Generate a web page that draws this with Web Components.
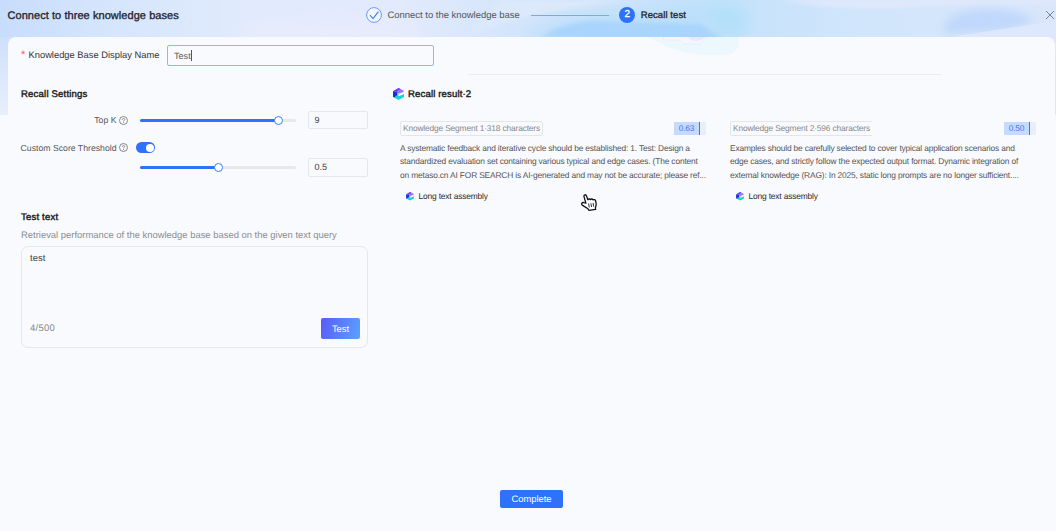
<!DOCTYPE html>
<html lang="en">
<head>
<meta charset="UTF-8">
<title>Recall test</title>
<style>
    html, body {
        margin: 0;
        height: 100%;
        overflow: hidden;
    }
    body {
        font-family: "Liberation Sans", Arial, sans-serif;
        text-rendering: geometricPrecision;
        background: #f9fafe;
        color: #444;
    }
</style>
</head>
<body>
<recall-page></recall-page>

<script>
// Small helper: every component gets an open shadow root with its own styles
class BaseElement extends HTMLElement {
    constructor() {
        super();
        this.attachShadow({ mode: "open" });
        this.shadowRoot.innerHTML = `
            <style>* { box-sizing: border-box; } ${this.styles()}</style>
            ${this.markup()}
        `;
    }
    styles() { return ""; }
    markup() { return ""; }
}

// Cube logo
class KbLogo extends BaseElement {
    styles() {
        return `
            :host { display: block; width: 11px; height: 12px; flex: none; }
            svg { display: block; width: 100%; height: 100%; }
        `;
    }
    markup() {
        return `
            <svg viewBox="0 0 22 24">
                <path d="M11 0 21 5 21 8 13 11 8 10 1 6Z" fill="#9a78f8"/>
                <path d="M11 0 15 2 6 8 1 6Z" fill="#6a45ec"/>
                <path d="M0 6 9 9 9 16 5 20 0 18Z" fill="#1c2be0"/>
                <path d="M9 10 13 11 12 15 9 15Z" fill="#9fc4fa"/>
                <path d="M7 15 13 16 22 12 22 18 11 24 2 19Z" fill="#18d3d4"/>
            </svg>
        `;
    }
}

// Decorative sky behind the header
class SkyBackdrop extends BaseElement {
    styles() {
        return `
            :host { display: block; position: absolute; inset: 0 0 auto 0; height: 115px; overflow: hidden; }
            svg { display: block; }
        `;
    }
    markup() {
        return `
            <svg width="1056" height="115" viewBox="0 0 1056 115">
                <defs>
                    <linearGradient id="base" x1="0" x2="1" y1="0" y2="0">
                        <stop offset="0" stop-color="#c7ddfc"/>
                        <stop offset=".1" stop-color="#d5e5fc"/>
                        <stop offset=".24" stop-color="#e1ebfc"/>
                        <stop offset=".38" stop-color="#e2eafc"/>
                        <stop offset=".52" stop-color="#cfe3fb"/>
                        <stop offset=".7" stop-color="#c6e2fb"/>
                        <stop offset=".82" stop-color="#d1e6fb"/>
                        <stop offset="1" stop-color="#d9e6fb"/>
                    </linearGradient>
                    <linearGradient id="side" x1="0" x2="0" y1="0" y2="1">
                        <stop offset="0" stop-color="#cfe0fb"/>
                        <stop offset="1" stop-color="#e8effc"/>
                    </linearGradient>
                    <filter id="soft" x="-20%" y="-60%" width="140%" height="220%"><feGaussianBlur stdDeviation="7"/></filter>
                    <filter id="mid" x="-20%" y="-60%" width="140%" height="220%"><feGaussianBlur stdDeviation="4"/></filter>
                    <filter id="edge" x="-10%" y="-20%" width="120%" height="140%"><feGaussianBlur stdDeviation="2"/></filter>
                </defs>
                <rect width="1056" height="115" fill="url(#base)"/>
                <rect y="37" width="30" height="78" fill="url(#side)"/>
                <ellipse cx="330" cy="32" rx="90" ry="12" fill="#e8ecfc" filter="url(#soft)"/>
                <path d="M460 40 Q520 10 640 0 L500 0 Z" fill="#dce9fb" filter="url(#edge)"/>
                <path d="M520 40 Q560 14 640 10 L700 0 740 20 745 40Z" fill="#bce0fa" filter="url(#soft)"/>
                <path d="M541 37 Q560 24 590 21 L700 24 726 40Z" fill="#a9d4fb" filter="url(#edge)"/>
                <path d="M706 6 Q740 0 746 16 T722 34Z" fill="#b3e0fa" filter="url(#soft)"/>
                <path d="M780 0 H1056 V4 Q960 4 900 7 T780 0Z" fill="#e2e9fc" filter="url(#edge)"/>
                <path d="M945 34 Q940 14 975 10 T1036 20 L1010 30Z" fill="#c0d8fb" filter="url(#mid)"/>
                <path d="M955 36 Q1010 28 1056 21 V60 H955Z" fill="#dde8fc"/>
            </svg>
        `;
    }
}

// Header: title, steps and close button
class WizardHeader extends BaseElement {
    styles() {
        return `
            :host { display: grid; grid-template-columns: 366px 1fr auto; align-items: center; height: 30px; flex: none; position: relative; }
            h1 { margin: 1px 0 0; padding-left: 7.5px; font-size: 11px; font-weight: 400; letter-spacing: .06px; color: #1d2129; -webkit-text-stroke: .3px #1d2129; }
            .steps { display: flex; align-items: center; font-size: 9.45px; color: #4e5560; white-space: nowrap; }
            .dot { width: 16px; height: 16px; margin-right: 5.5px; display: block; flex: none; }
            .line { width: 78px; height: 1px; background: #7ba6f6; margin: 0 10.5px 0 11px; }
            .num { border-radius: 50%; background: #2e71fb; color: #fff; font-size: 10px; line-height: 16px; text-align: center; -webkit-text-stroke: .3px #fff; }
            .now { color: #1d2129; font-size: 9.5px; letter-spacing: .08px; -webkit-text-stroke: .3px #1d2129; }
            .close { width: 10px; height: 10px; margin-right: 1px; display: block; }
        `;
    }
    markup() {
        return `
            <h1>Connect to three knowledge bases</h1>
            <div class="steps">
                <svg class="dot" viewBox="0 0 16 16" fill="none">
                    <circle cx="8" cy="8" r="7.4" fill="#f2f7ff" stroke="#5a91f8" stroke-width=".9"/>
                    <path d="M4 8.2 7 11.6 12.4 4.6" stroke="#3f7ef8" stroke-width="1.1"/>
                </svg>
                <span>Connect to the knowledge base</span>
                <span class="line"></span>
                <span class="dot num">2</span>
                <span class="now">Recall test</span>
            </div>
            <svg class="close" viewBox="0 0 10 10" stroke="#7a8496" stroke-width="1"><path d="M1 1 9 9M9 1 1 9"/></svg>
        `;
    }
}

// Label with the question mark
class HelpLabel extends BaseElement {
    styles() {
        return `
            :host { display: flex; align-items: center; justify-content: flex-end; gap: 2.5px; font-size: 8.7px; color: #555; white-space: nowrap; }
            svg { width: 9px; height: 9px; flex: none; }
        `;
    }
    markup() {
        return `
            <slot></slot>
            <svg viewBox="0 0 18 18" fill="none" stroke="#666" stroke-width="1.5">
                <circle cx="9" cy="9" r="8"/>
                <path d="M6.6 7.4C6.6 4 11.6 4.2 11.4 7.2 11.3 8.8 9 8.8 9 11"/>
                <path d="M9 12.4V14"/>
            </svg>
        `;
    }
}

class RangeSlider extends BaseElement {
    static get observedAttributes() { return ["percent"]; }
    styles() {
        return `
            :host { display: grid; align-items: center; width: 156px; height: 10px; }
            .track { height: 3px; border-radius: 2px; background: #e7e9e9; display: flex; align-items: center; }
            .fill { height: 3px; border-radius: 2px; background: #2e71fb; }
            .knob { width: 9px; height: 9px; flex: none; margin: 0 -4.5px; border: 1.2px solid #3c7cfb; border-radius: 50%; background: #fff; }
        `;
    }
    markup() {
        return `<div class="track"><div class="fill"></div><div class="knob"></div></div>`;
    }
    attributeChangedCallback(name, old, value) {
        this.shadowRoot.querySelector(".fill").style.width = `${value}%`;
    }
}

class NumberBox extends BaseElement {
    styles() {
        return `
            :host { display: flex; align-items: center; width: 60px; height: 18px; padding-left: 5.5px; border: 1px solid #e6e7ea; border-radius: 2px; font-size: 9px; color: #444; box-sizing: border-box; }
        `;
    }
    markup() { return `<slot></slot>`; }
}

class ToggleSwitch extends BaseElement {
    styles() {
        return `
            :host { display: flex; align-items: center; justify-content: flex-end; width: 19px; height: 11px; border-radius: 6px; background: #2e71fb; padding-right: 1.5px; box-sizing: border-box; }
            i { width: 8px; height: 8px; border-radius: 50%; background: #fff; }
        `;
    }
    markup() { return `<i></i>`; }
}

// Left column: settings and query box
class RecallSettings extends BaseElement {
    styles() {
        return `
            :host { display: block; width: 347px; padding-top: 1px; }
            h2 { margin: 0; font-size: 9.6px; line-height: 12px; font-weight: 400; letter-spacing: .17px; color: #1a1a1a; -webkit-text-stroke: .4px #1a1a1a; }
            .grid { display: grid; grid-template: 18px 37px 20px / 107px 156px 60px; column-gap: 12px; align-items: center; margin-top: 10px; }
            toggle-switch { margin-left: -4px; }
            .second { grid-column: 2 / 4; display: flex; gap: 12px; align-items: center; align-self: start; margin-top: -9px; height: 20px; }
            .second number-box { height: 19px; }
            .query { margin-top: 26px; }
            p { margin: 5px 0; font-size: 9.43px; line-height: 12px; color: #8a8d92; white-space: nowrap; }
            .box { height: 102px; border: 1px solid #e6e7ea; border-radius: 7px; padding: 6px 7px 8px 8px; display: flex; flex-direction: column; justify-content: space-between; font-size: 9.5px; }
            .foot { display: flex; justify-content: space-between; align-items: center; color: #888; letter-spacing: .28px; }
            .go { width: 39px; height: 21px; border-radius: 2px; background: linear-gradient(105deg, #565cfb, #5b7afd 45%, #58a2ff); color: #fff; display: grid; place-items: center; font-size: 9.4px; letter-spacing: 0; }
        `;
    }
    markup() {
        return `
            <h2>Recall Settings</h2>
            <div class="grid">
                <help-label>Top K</help-label>
                <range-slider percent="89"></range-slider>
                <number-box>9</number-box>
                <help-label>Custom Score Threshold</help-label>
                <toggle-switch></toggle-switch>
                <span></span>
                <div class="second">
                    <range-slider percent="50"></range-slider>
                    <number-box>0.5</number-box>
                </div>
            </div>
            <div class="query">
                <h2>Test text</h2>
                <p>Retrieval performance of the knowledge base based on the given text query</p>
                <div class="box">
                    <span>test</span>
                    <div class="foot"><span>4/500</span><span class="go">Test</span></div>
                </div>
            </div>
        `;
    }
}

// One recalled segment; the lines come in through the slot
class SegmentCard extends BaseElement {
    styles() {
        return `
            :host { display: block; width: 306px; font-size: 8.4px; letter-spacing: -.16px; }
            .top { display: flex; justify-content: space-between; align-items: center; height: 15px; }
            .tag { height: 15px; border: 1px solid #e4e5e7; border-radius: 2px; padding: 0 2px; line-height: 13px; color: #888; white-space: nowrap; }
            :host([open-end]) .tag { border-right-color: transparent; }
            .score { width: 32px; height: 13px; background: #e7eefe; display: flex; }
            .score b { width: 26px; background: #c5dafd; border-right: 1px solid #3b76ee; color: #3e7af5; font-weight: 400; line-height: 13px; text-align: center; font-size: 8.3px; letter-spacing: -.1px; }
            .body { margin-top: 6px; line-height: 13.3px; color: #555; white-space: pre; }
            .from { display: flex; align-items: center; gap: 4.5px; margin: 9.5px 0 0 6px; color: #2a2a2a; line-height: 10px; }
            kb-logo { width: 8px; height: 8.5px; }
        `;
    }
    markup() {
        return `
            <div class="top"><span class="tag"></span><span class="score"><b></b></span></div>
            <div class="body"><slot></slot></div>
            <div class="from"><kb-logo></kb-logo><span>Long text assembly</span></div>
        `;
    }
    connectedCallback() {
        this.shadowRoot.querySelector(".tag").textContent = this.getAttribute("label");
        this.shadowRoot.querySelector("b").textContent = this.getAttribute("score");
    }
}

class RecallResults extends BaseElement {
    styles() {
        return `
            :host { display: block; }
            h2 { margin: 0; display: flex; align-items: center; gap: 4px; height: 12px; font-size: 9.6px; font-weight: 400; letter-spacing: .13px; color: #1a1a1a; -webkit-text-stroke: .4px #1a1a1a; }
            .cards { display: flex; gap: 24px; margin: 21px 0 0 7px; }
        `;
    }
    markup() {
        return `
            <h2><kb-logo></kb-logo><span>Recall result·2</span></h2>
            <div class="cards">
                <segment-card label="Knowledge Segment 1·318 characters" score="0.63"><div>A systematic feedback and iterative cycle should be established: 1. Test: Design a</div><div>standardized evaluation set containing various typical and edge cases. (The content</div><div>on metaso.cn AI FOR SEARCH is AI-generated and may not be accurate; please ref...</div></segment-card>
                <segment-card open-end label="Knowledge Segment 2·596 characters" score="0.50"><div>Examples should be carefully selected to cover typical application scenarios and</div><div>edge cases, and strictly follow the expected output format. Dynamic integration of</div><div>external knowledge (RAG): In 2025, static long prompts are no longer sufficient....</div></segment-card>
            </div>
        `;
    }
}

// Hand pointer floating over the results
class HandPointer extends BaseElement {
    styles() {
        return `
            :host { display: block; position: absolute; left: 581px; top: 194px; width: 16px; height: 17px; }
            svg { display: block; width: 100%; height: 100%; }
        `;
    }
    markup() {
        return `
            <svg viewBox="0 0 16 17" fill="#fff" stroke="#111" stroke-width="1.3" stroke-linejoin="round">
                <path d="M4.9 9.2 3 2.6C2.6.6 4.9.1 5.4 1.8L6.9 5.8C7.5 4.7 9 4.8 9.4 5.6 10.2 4.6 11.7 4.9 12 5.9 13.1 5.1 14.4 5.8 14.6 7 15.4 9.6 15.4 11.6 14.4 13.6L14.6 15.4 7.8 16.3 7 14.8 1.6 11.4C-.2 10 1 8 2.8 8.6Z"/>
                <path d="M7.6 9.6 8.3 13.4M9.9 9.3 10.5 13M12.1 9 12.6 12.6" fill="none" stroke-width=".9"/>
            </svg>
        `;
    }
}

class RecallPage extends BaseElement {
    styles() {
        return `
            :host { display: flex; flex-direction: column; width: 1056px; height: 531px; position: relative; overflow: hidden; }
            .panel { position: relative; flex: 1; margin: 7px 1px 0 8px; border-radius: 8px 8px 0 0; background: #f9fafe; overflow: hidden; display: flex; flex-direction: column; }
            .glow { position: absolute; left: 638px; top: 0; }
            .name { position: relative; display: flex; align-items: center; height: 21px; margin: 8px 0 0 13px; font-size: 9.35px; color: #333; }
            .name i { font-style: normal; font-size: 11px; line-height: 11px; color: #f35b5b; width: 7.5px; }
            .name span { width: 138.5px; margin-top: -2px; }
            .field { width: 267px; height: 21px; border: 1px solid #8fb6f8; border-radius: 2px; padding-left: 6px; display: flex; align-items: center; font-size: 9.1px; color: #555; }
            .field::after { content: ""; width: 1px; height: 11px; background: #555; }
            hr { width: 473px; height: 1px; border: 0; background: #ececf0; margin: 8px 0 0 460px; }
            .cols { display: flex; gap: 24px; margin: 13px 0 0 13px; }
            recall-settings { margin-right: 1px; }
            .done { width: 63px; height: 18px; border-radius: 2px; background: #2e71fb; color: #fff; font-size: 9.4px; line-height: 17px; text-align: center; margin: auto 0 23px 492px; }
        `;
    }
    markup() {
        return `
            <sky-backdrop></sky-backdrop>
            <wizard-header></wizard-header>
            <div class="panel">
                <svg class="glow" width="94" height="19" viewBox="0 0 94 19">
                    <path d="M0 0H93V8Q90 18 78 18H58Q28 15 14 6Z" fill="#edf8fe"/>
                    <path d="M17 0H62L54 7H38L33 3H18Z" fill="#f5f7fe" stroke="#e4eafa" stroke-width=".7"/>
                    <path d="M43 0H60Q56 4 50 4T43 0Z" fill="#e5ebfb"/>
                </svg>
                <div class="name"><i>*</i><span>Knowledge Base Display Name</span><div class="field">Test</div></div>
                <hr>
                <div class="cols">
                    <recall-settings></recall-settings>
                    <recall-results></recall-results>
                </div>
                <div class="done">Complete</div>
            </div>
            <hand-pointer></hand-pointer>
        `;
    }
}

customElements.define("kb-logo", KbLogo);
customElements.define("sky-backdrop", SkyBackdrop);
customElements.define("wizard-header", WizardHeader);
customElements.define("help-label", HelpLabel);
customElements.define("range-slider", RangeSlider);
customElements.define("number-box", NumberBox);
customElements.define("toggle-switch", ToggleSwitch);
customElements.define("recall-settings", RecallSettings);
customElements.define("segment-card", SegmentCard);
customElements.define("recall-results", RecallResults);
customElements.define("hand-pointer", HandPointer);
customElements.define("recall-page", RecallPage);
</script>
</body>
</html>
